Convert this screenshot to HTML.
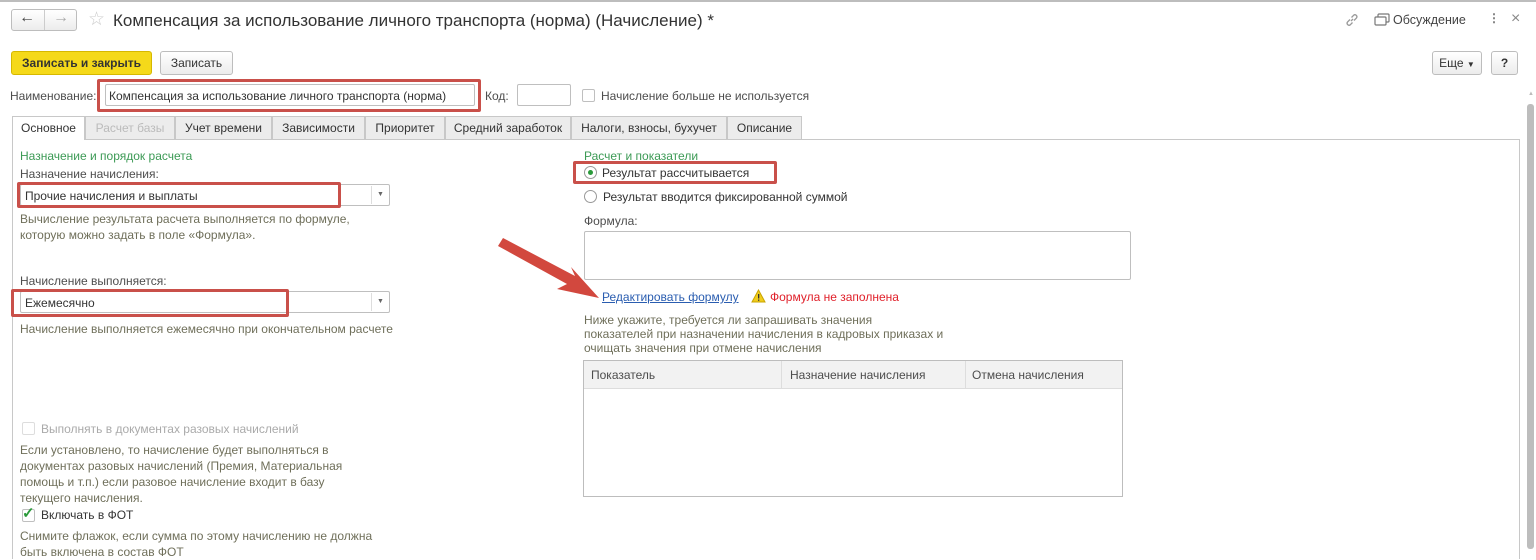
<!DOCTYPE html>
<html><head><meta charset="utf-8"><style>
*{box-sizing:border-box;margin:0;padding:0}
body{width:1536px;height:549px;overflow:hidden;background:#fff;font-family:"Liberation Sans",Arial,sans-serif;font-size:12px;color:#4d4d4d;position:relative}
.a{position:absolute;white-space:nowrap}
.hint{color:#6f6f5a;font-size:12px;line-height:16px}
.green{color:#3c9a55}
.inp{position:absolute;border:1px solid #bfbfbf;border-radius:2px;background:#fff}
.red{position:absolute;border:3px solid #c9504a;border-radius:2px}
.btn{position:absolute;border:1px solid #bdbdbd;border-radius:3px;background:linear-gradient(#fff,#ececec);text-align:center;color:#333}
.tab{position:absolute;top:116px;height:23px;border:1px solid #c8c8c8;border-bottom:none;background:#ececec;text-align:center;line-height:22px;color:#333;font-size:12px}
.dd{position:absolute;width:18px;border-left:1px solid #ddd;text-align:center;font-size:7px;color:#666}
</style></head><body>
<div class="a" style="left:0;top:0;width:1536px;height:2px;background:#bdbdbd"></div>
<div class="btn" style="left:11px;top:9px;width:66px;height:22px"></div>
<div class="a" style="left:44px;top:10px;width:1px;height:20px;background:#ccc"></div>
<div class="a" style="left:19px;top:9px;font-size:16px;color:#444">&#8592;</div>
<div class="a" style="left:53px;top:9px;font-size:16px;color:#aaa">&#8594;</div>
<div class="a" style="left:88px;top:8px;font-size:19px;color:#ccc">&#9734;</div>
<div class="a" style="left:113px;top:11px;font-size:17px;color:#333">Компенсация за использование личного транспорта (норма) (Начисление) *</div>
<svg class="a" style="left:1344px;top:12px" width="16" height="16"><g fill="none" stroke="#999" stroke-width="1.3"><path d="M7 9 L9 7"/><path d="M6 7.5 L3.5 10 a2 2 0 0 0 2.8 2.8 L8.5 10.5"/><path d="M10 8.5 L12.5 6 a2 2 0 0 0 -2.8 -2.8 L7.5 5.5"/></g></svg>
<svg class="a" style="left:1374px;top:13px" width="16" height="14"><rect x="4" y="1" width="11" height="8" fill="none" stroke="#777" stroke-width="1.2" rx="1"/><rect x="1" y="4" width="11" height="8" fill="#fff" stroke="#777" stroke-width="1.2" rx="1"/></svg>
<div class="a" style="left:1393px;top:13px;color:#444;font-size:12.5px">Обсуждение</div>
<div class="a" style="left:1488px;top:11px;color:#777;font-weight:bold">&#8942;</div>
<div class="a" style="left:1511px;top:10px;font-size:16px;color:#888">&#215;</div>
<div class="btn" style="left:11px;top:51px;width:141px;height:24px;background:#f5d91a;border-color:#d6b800;font-weight:bold;line-height:22px;font-size:12px">Записать и закрыть</div>
<div class="btn" style="left:160px;top:51px;width:73px;height:24px;line-height:22px;font-size:12px">Записать</div>
<div class="btn" style="left:1432px;top:51px;width:50px;height:24px;line-height:22px">Еще <span style="font-size:8px">&#9660;</span></div>
<div class="btn" style="left:1491px;top:51px;width:27px;height:24px;line-height:22px;font-weight:bold">?</div>
<div class="a" style="left:10px;top:89px">Наименование:</div>
<div class="inp" style="left:105px;top:84px;width:370px;height:22px"></div>
<div class="a" style="left:109px;top:89px;color:#333;font-size:12px">Компенсация за использование личного транспорта (норма)</div>
<div class="red" style="left:97px;top:79px;width:384px;height:33px"></div>
<div class="a" style="left:485px;top:89px">Код:</div>
<div class="inp" style="left:517px;top:84px;width:54px;height:22px"></div>
<div class="inp" style="left:582px;top:89px;width:13px;height:13px"></div>
<div class="a" style="left:601px;top:89px">Начисление больше не используется</div>
<div class="tab" style="left:12px;width:73px;background:#fff;height:24px">Основное</div>
<div class="tab" style="left:85px;width:90px;color:#bbb">Расчет базы</div>
<div class="tab" style="left:175px;width:97px">Учет времени</div>
<div class="tab" style="left:272px;width:93px">Зависимости</div>
<div class="tab" style="left:365px;width:80px">Приоритет</div>
<div class="tab" style="left:445px;width:126px">Средний заработок</div>
<div class="tab" style="left:571px;width:156px">Налоги, взносы, бухучет</div>
<div class="tab" style="left:727px;width:75px">Описание</div>
<div class="a" style="left:12px;top:139px;width:1508px;height:420px;border:1px solid #c8c8c8;border-bottom:none"></div>
<div class="a" style="left:13px;top:138px;width:71px;height:2px;background:#fff"></div>
<div class="a" style="left:1528px;top:91px;font-size:6px;color:#bbb">&#9650;</div>
<div class="a" style="left:1527px;top:104px;width:7px;height:445px;background:#bdbdbd;border-radius:3px"></div>
<div class="a green" style="left:20px;top:149px">Назначение и порядок расчета</div>
<div class="a" style="left:20px;top:167px">Назначение начисления:</div>
<div class="inp" style="left:20px;top:184px;width:370px;height:22px"></div>
<div class="dd" style="left:371px;top:186px;height:18px;line-height:18px">&#9660;</div>
<div class="a" style="left:25px;top:189px;color:#333">Прочие начисления и выплаты</div>
<div class="red" style="left:17px;top:182px;width:324px;height:26px"></div>
<div class="a hint" style="left:20px;top:211px">Вычисление результата расчета выполняется по формуле,<br>которую можно задать в поле «Формула».</div>
<div class="a" style="left:20px;top:274px">Начисление выполняется:</div>
<div class="inp" style="left:20px;top:291px;width:370px;height:22px"></div>
<div class="dd" style="left:371px;top:293px;height:18px;line-height:18px">&#9660;</div>
<div class="a" style="left:25px;top:296px;color:#333">Ежемесячно</div>
<div class="red" style="left:11px;top:289px;width:278px;height:28px"></div>
<div class="a hint" style="left:20px;top:321px">Начисление выполняется ежемесячно при окончательном расчете</div>
<div class="inp" style="left:22px;top:422px;width:13px;height:13px;border-color:#ddd"></div>
<div class="a" style="left:41px;top:422px;color:#aaa">Выполнять в документах разовых начислений</div>
<div class="a hint" style="left:20px;top:442px">Если установлено, то начисление будет выполняться в<br>документах разовых начислений (Премия, Материальная<br>помощь и т.п.) если разовое начисление входит в базу<br>текущего начисления.</div>
<div class="inp" style="left:22px;top:509px;width:13px;height:13px"></div>
<div class="a" style="left:22px;top:504px;color:#2a9a3a;font-size:15px;font-weight:bold">&#10003;</div>
<div class="a" style="left:41px;top:508px;color:#333">Включать в ФОТ</div>
<div class="a hint" style="left:20px;top:528px">Снимите флажок, если сумма по этому начислению не должна<br>быть включена в состав ФОТ</div>
<div class="a green" style="left:584px;top:149px">Расчет и показатели</div>
<div class="a" style="left:584px;top:166px;width:13px;height:13px;border:1px solid #999;border-radius:50%"></div>
<div class="a" style="left:588px;top:170px;width:5px;height:5px;background:#2a9a3a;border-radius:50%"></div>
<div class="a" style="left:602px;top:166px;color:#333">Результат рассчитывается</div>
<div class="red" style="left:573px;top:161px;width:204px;height:23px"></div>
<div class="a" style="left:584px;top:190px;width:13px;height:13px;border:1px solid #999;border-radius:50%"></div>
<div class="a" style="left:603px;top:190px;color:#333">Результат вводится фиксированной суммой</div>
<div class="a" style="left:584px;top:214px">Формула:</div>
<div class="inp" style="left:584px;top:231px;width:547px;height:49px"></div>
<div class="a" style="left:602px;top:290px;color:#2a5db0;text-decoration:underline">Редактировать формулу</div>
<svg class="a" style="left:751px;top:289px" width="15" height="14"><path d="M7.5 1 L14 13 L1 13 Z" fill="#f0cc1c" stroke="#c9a400"/><rect x="7" y="5" width="1.3" height="4.5" fill="#333"/><rect x="7" y="10.5" width="1.3" height="1.3" fill="#333"/></svg>
<div class="a" style="left:770px;top:290px;color:#e0202a">Формула не заполнена</div>
<div class="a hint" style="left:584px;top:313px;line-height:14px">Ниже укажите, требуется ли запрашивать значения<br>показателей при назначении начисления в кадровых приказах и<br>очищать значения при отмене начисления</div>
<div class="a" style="left:583px;top:360px;width:540px;height:137px;border:1px solid #bdbdbd"></div>
<div class="a" style="left:584px;top:361px;width:538px;height:28px;background:#f2f2f2;border-bottom:1px solid #ddd"></div>
<div class="a" style="left:781px;top:361px;width:1px;height:28px;background:#ddd"></div>
<div class="a" style="left:965px;top:361px;width:1px;height:28px;background:#ddd"></div>
<div class="a" style="left:591px;top:368px">Показатель</div>
<div class="a" style="left:790px;top:368px">Назначение начисления</div>
<div class="a" style="left:972px;top:368px">Отмена начисления</div>
<svg class="a" style="left:495px;top:232px" width="110" height="72"><path d="M8 6 L80 44 L76 35 L104 66 L62 57 L72 52 L3 14 Z" fill="#d2483e"/></svg>
</body></html>
